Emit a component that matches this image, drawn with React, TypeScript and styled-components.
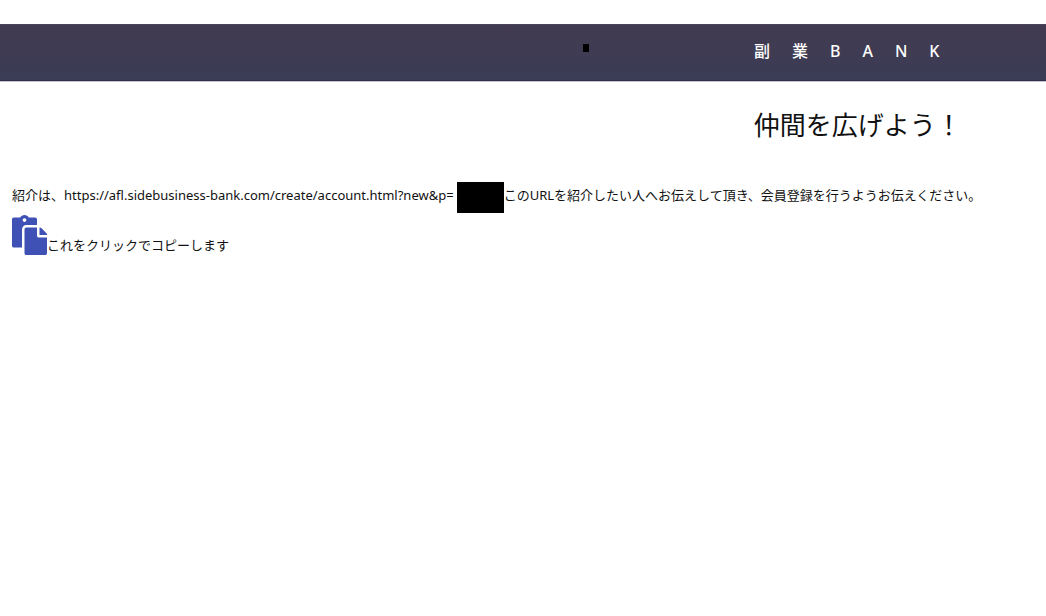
import React from "react";
import styled, { createGlobalStyle } from "styled-components";
import { FaPaste } from "react-icons/fa";

const GlobalStyle = createGlobalStyle`
  * { box-sizing: border-box; }
  body {
    margin: 0;
    background: #fff;
    color: #111;
    font-family: "Noto Sans", "Noto Sans CJK JP", sans-serif;
    font-size: 13px;
  }
`;

const Page = styled.div`
  padding-top: 24px;
`;

const Header = styled.header`
  display: grid;
  grid-template-columns: 64% 1fr;
  height: 57px;
  background: linear-gradient(#423b50, #3b3c56);
  border-top: 1px solid #4a465a;
  border-bottom: 1px solid #2e2e50;
  box-shadow: 0 1px 0 #c8c6c8;
`;

const MarkCell = styled.div`
  display: flex;
  justify-content: flex-end;
  padding: 19px 80px 0 0;
`;

const Mark = styled.span`
  width: 6px;
  height: 8px;
  background: #000;
`;

const Brand = styled.div`
  color: #fff;
  font-size: 16px;
  font-weight: 500;
  line-height: 52px;
  letter-spacing: 22px;
  text-align: center;
  white-space: nowrap;
`;

const Title = styled.h1`
  margin: 24px 0 0 64%;
  font-size: 26px;
  font-weight: 400;
  line-height: 40px;
  text-align: center;
  white-space: nowrap;
`;

const Main = styled.main`
  padding: 0 12px;
`;

const Invite = styled.p`
  display: flex;
  flex-wrap: wrap;
  align-items: flex-start;
  margin: 37px 0 0;
  line-height: 26px;
`;

const Redaction = styled.span`
  width: 47px;
  height: 31px;
  margin-left: 3px;
  background: #000;
`;

const CopyRow = styled.div`
  display: flex;
  align-items: flex-end;
  margin-top: 2px;
`;

const CopyButton = styled.button`
  display: flex;
  padding: 0;
  border: 0;
  background: none;
  color: #3f51b5;
  cursor: pointer;

  svg {
    width: 35px;
    height: 40px;
  }
`;

const CopyLabel = styled.label`
  line-height: 20px;
`;

export default function App() {
  return (
    <>
      <GlobalStyle />
      <Page>
        <Header>
          <MarkCell>
            <Mark />
          </MarkCell>
          <Brand>副業BANK</Brand>
        </Header>
        <Title>仲間を広げよう！</Title>
        <Main>
          <Invite>
            <span>紹介は、https://afl.sidebusiness-bank.com/create/account.html?new&amp;p=</span>
            <Redaction />
            <span>このURLを紹介したい人へお伝えして頂き、会員登録を行うようお伝えください。</span>
          </Invite>
          <CopyRow>
            <CopyButton id="copy" type="button">
              <FaPaste />
            </CopyButton>
            <CopyLabel htmlFor="copy">これをクリックでコピーします</CopyLabel>
          </CopyRow>
        </Main>
      </Page>
    </>
  );
}
